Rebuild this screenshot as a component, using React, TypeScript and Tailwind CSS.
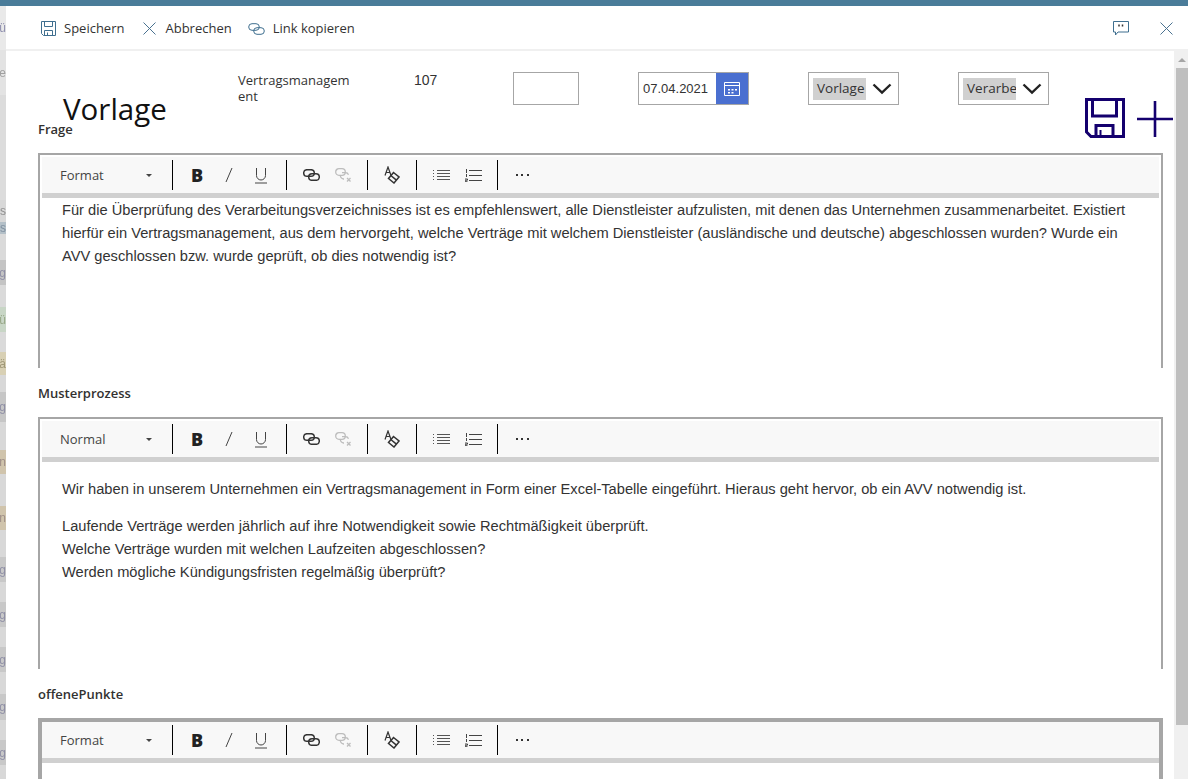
import React from 'react';

const strip = [
  { h: 44, c: 'bg-[#e9e9e9]', t: 'ü', k: 'text-[#8f8fae]' },
  { h: 45, c: 'bg-[#e3e3e3]', t: 'ie', k: 'text-[#a0a0a0]' },
  { h: 105, c: 'bg-[#dcdcdc]', t: '', k: '' },
  { h: 22, c: 'bg-[#d8d8d8]', t: 'is', k: 'text-[#8f8f8f]' },
  { h: 12, c: 'bg-[#b4c0c8]', t: 's', k: 'text-[#7f8f9f]' },
  { h: 26, c: 'bg-[#dadada]', t: '', k: '' },
  { h: 25, c: 'bg-[#c4c4c4]', t: 'ng', k: 'text-[#8f8fa5]' },
  { h: 22, c: 'bg-[#dadada]', t: '', k: '' },
  { h: 25, c: 'bg-[#c8d6c6]', t: 'ü', k: 'text-[#98a888]' },
  { h: 20, c: 'bg-[#dadada]', t: '', k: '' },
  { h: 23, c: 'bg-[#d8d0b4]', t: 'ä', k: 'text-[#a09878]' },
  { h: 17, c: 'bg-[#d8d8d8]', t: '', k: '' },
  { h: 30, c: 'bg-[#c6c6c6]', t: 'ng', k: 'text-[#8f8fa5]' },
  { h: 28, c: 'bg-[#d8d8d8]', t: '', k: '' },
  { h: 24, c: 'bg-[#d0c4ac]', t: 'n', k: 'text-[#a09088]' },
  { h: 32, c: 'bg-[#d8d8d8]', t: '', k: '' },
  { h: 24, c: 'bg-[#d0c4ac]', t: 'n', k: 'text-[#a09088]' },
  { h: 27, c: 'bg-[#d8d8d8]', t: '', k: '' },
  { h: 25, c: 'bg-[#c8c8c8]', t: 'ng', k: 'text-[#8f8fa5]' },
  { h: 20, c: 'bg-[#d8d8d8]', t: '', k: '' },
  { h: 25, c: 'bg-[#c8c8c8]', t: 'ng', k: 'text-[#8f8fa5]' },
  { h: 20, c: 'bg-[#d8d8d8]', t: '', k: '' },
  { h: 25, c: 'bg-[#c8c8c8]', t: 'ng', k: 'text-[#8f8fa5]' },
  { h: 22, c: 'bg-[#d8d8d8]', t: '', k: '' },
  { h: 26, c: 'bg-[#c8c8c8]', t: 'ng', k: 'text-[#8f8fa5]' },
  { h: 20, c: 'bg-[#d8d8d8]', t: '', k: '' },
  { h: 25, c: 'bg-[#c8c8c8]', t: 'ng', k: 'text-[#8f8fa5]' },
  { h: 16, c: 'bg-[#d8d8d8]', t: '', k: '' },
];

function SaveIcon() {
  return (
    <svg width="15" height="15" viewBox="0 0 15 15" fill="none" stroke="#3f6f8f" strokeWidth="1">
      <path d="M.5.5h14v14h-12l-2-2z" />
      <path d="M3.5.5v5h8v-5M3.5 14.5v-5h8v5M6.5 14.5v-3" />
    </svg>
  );
}

function CloseIcon() {
  return (
    <svg width="13" height="13" viewBox="0 0 13 13" fill="none" stroke="#4a7290" strokeWidth="1">
      <path d="M.5.5l12 12M12.5.5l-12 12" />
    </svg>
  );
}

function LinkIcon({ color = '#3f6f8f', w = 1 }: { color?: string; w?: number }) {
  return (
    <svg width="17" height="12" viewBox="0 0 17 12" fill="none" stroke={color} strokeWidth={w}>
      <rect x="0.7" y="0.7" width="10.6" height="6.6" rx="3.3" />
      <rect x="5.7" y="4.7" width="10.6" height="6.6" rx="3.3" />
    </svg>
  );
}

function FeedbackIcon() {
  return (
    <svg width="16" height="15" viewBox="0 0 16 15" fill="none" stroke="#3f6f8f" strokeWidth="1">
      <path d="M.5.5h15v10.5H5l-2.5 3V11H.5z" />
      <path d="M6 3.5v2M9.5 3.5v2" strokeWidth="1.5" stroke="#333333" />
    </svg>
  );
}

function Chevron() {
  return (
    <svg width="20" height="12" viewBox="0 0 20 12" fill="none" stroke="#222222" strokeWidth="2.4">
      <path d="M1.5 1.5L10 9.5l8.5-8" />
    </svg>
  );
}

function Dropdown({ label }: { label: string }) {
  return (
    <div className="w-[91px] h-[33px] border border-[#a6a6a6] flex items-center pl-[4px] gap-[6px]">
      <div className="w-[53px] h-[22px] bg-[#d0d0d0] overflow-hidden whitespace-nowrap text-[13.5px] leading-[21px] pl-[4px] text-[#333333]">
        {label}
      </div>
      <Chevron />
    </div>
  );
}

function ToolButton({ children }: { children: React.ReactNode }) {
  return <div className="w-[32px] h-[30px] flex items-center justify-center">{children}</div>;
}

function Toolbar({ label }: { label: string }) {
  return (
    <div>
      <div className="h-[36px] bg-[#f8f8f8] flex items-center">
        <div className="w-[130px] h-[30px] flex items-center justify-between pl-[18px] pr-[20px] pt-[1px] text-[13px] text-[#444444]">
          <span>{label}</span>
          <span className="w-0 h-0 border-x-[3px] border-x-transparent border-t-[3px] border-t-[#444444]" />
        </div>
        <div className="h-[30px] flex pl-[8px] pr-[9px] border-l border-black">
          <ToolButton>
            <span className="text-[18px] font-extrabold text-[#222222]">B</span>
          </ToolButton>
          <ToolButton>
            <svg width="10" height="16" viewBox="0 0 10 16" fill="none" stroke="#444444" strokeWidth="1">
              <path d="M8 1L2 15" />
            </svg>
          </ToolButton>
          <ToolButton>
            <svg width="14" height="17" viewBox="0 0 14 17" fill="none" stroke="#444444" strokeWidth="1">
              <path d="M2.5 1v7.5a4.5 4.5 0 0 0 9 0V1M1 16h12" />
            </svg>
          </ToolButton>
        </div>
        <div className="h-[30px] flex px-[8px] border-l border-black">
          <ToolButton>
            <LinkIcon color="#333333" w={1.5} />
          </ToolButton>
          <ToolButton>
            <svg width="17" height="14" viewBox="0 0 17 14" fill="none" stroke="#bdbdbd" strokeWidth="1.3">
              <rect x="0.7" y="0.7" width="9.6" height="6.6" rx="3.3" />
              <path d="M7 4.7h3.5a3.3 3.3 0 0 1 3 2M9 11H8.5a3.3 3.3 0 0 1-3-4" />
              <path d="M12 10l3.5 3.5M15.5 10L12 13.5" />
            </svg>
          </ToolButton>
        </div>
        <div className="h-[30px] flex px-[8px] border-l border-black">
          <ToolButton>
            <svg width="16" height="18" viewBox="0 0 16 18" fill="none" stroke="#333333" strokeWidth="1.2">
              <path d="M1 9.5L4 1l3 8.5M2 6.5h4" />
              <path d="M9.5 6.5l5.5 4.5-5 6-5.5-4.5zM6.8 9.5l5.6 4.6" strokeWidth="1.5" />
            </svg>
          </ToolButton>
        </div>
        <div className="h-[30px] flex px-[8px] border-l border-black">
          <ToolButton>
            <svg width="17" height="13" viewBox="0 0 17 13" fill="none" stroke="#555555" strokeWidth="1.2">
              <path d="M4 1.5h13M4 4.5h13M4 7.5h13M4 10.5h13" />
              <path d="M0 1.5h2M0 4.5h2M0 7.5h2M0 10.5h2" strokeDasharray="1 1" />
            </svg>
          </ToolButton>
          <ToolButton>
            <svg width="17" height="13" viewBox="0 0 17 13" fill="none" stroke="#444444" strokeWidth="1">
              <path d="M4 1.5h13M4 6.5h13M4 11.5h13" />
              <path d="M1.5 0v4M1.5 5v3M0 10h2.5v1.2H0v1.5h2.5" />
            </svg>
          </ToolButton>
        </div>
        <div className="h-[30px] flex px-[8px] border-l border-black">
          <ToolButton>
            <span className="flex gap-[3.5px]">
              <span className="w-[2px] h-[2px] bg-[#333333]" />
              <span className="w-[2px] h-[2px] bg-[#333333]" />
              <span className="w-[2px] h-[2px] bg-[#333333]" />
            </span>
          </ToolButton>
        </div>
      </div>
      <div className="h-[5px] bg-[#d0d0d0]" />
    </div>
  );
}

function FieldLabel({ children }: { children: React.ReactNode }) {
  return <div className="h-[16px] text-[13px] leading-[16px] font-semibold text-[#323130]">{children}</div>;
}

export default function App() {
  return (
    <div className="w-[1188px] h-[779px] overflow-hidden flex flex-col bg-white" style={{ fontFamily: '"Open Sans", sans-serif' }}>
      <div className="h-[6px] shrink-0 bg-[#4a7c99]" />
      <div className="flex flex-1 min-h-0">
        {/* Liste hinter dem Panel */}
        <div className="w-[6px] shrink-0 overflow-hidden">
          <div className="flex flex-col blur-[0.5px]" style={{ fontFamily: '"Liberation Sans", sans-serif' }}>
            {strip.map((r, i) => (
              <div
                key={i}
                className={`${r.c} ${r.k} flex items-center justify-end shrink-0 overflow-hidden text-[12px] whitespace-nowrap`}
                style={{ height: r.h }}
              >
                {r.t}
              </div>
            ))}
          </div>
        </div>

        <div className="flex-1 min-w-0 flex flex-col">
          {/* Befehlsleiste */}
          <div className="h-[45px] shrink-0 border-b-2 border-[#f0f0f0] flex items-center pl-[35px] pr-[15px] pt-[2px] text-[13px] text-[#333333]">
            <div className="flex items-center gap-[8px] mr-[19px]">
              <SaveIcon />
              <span>Speichern</span>
            </div>
            <div className="flex items-center gap-[9px] mr-[16px]">
              <CloseIcon />
              <span>Abbrechen</span>
            </div>
            <div className="flex items-center gap-[8px]">
              <LinkIcon />
              <span>Link kopieren</span>
            </div>
            <div className="ml-auto flex items-center gap-[31px]">
              <FeedbackIcon />
              <CloseIcon />
            </div>
          </div>

          <div className="flex flex-1 min-h-0">
            <div className="flex-1 min-w-0 pl-[32px] pr-[11px] overflow-hidden">
              {/* Kopfzeile */}
              <div className="h-[70px] flex items-start">
                <div className="w-[200px] shrink-0 pl-[25px] pt-[38px] text-[29.5px] leading-[40px] text-[#111111]">Vorlage</div>
                <div className="w-[176px] shrink-0 pt-[21px]">
                  <div className="w-[118px] break-all text-[13px] leading-[16px] text-[#333333]">Vertragsmanagement</div>
                </div>
                <div className="w-[99px] shrink-0 pt-[21px] text-[14px] leading-[16px] text-[#333333]" style={{ fontFamily: '"Liberation Sans", sans-serif' }}>107</div>
                <div className="mt-[21px] w-[66px] h-[33px] shrink-0 border border-[#a6a6a6]" />
                <div className="ml-[59px] mt-[21px] w-[111px] h-[33px] shrink-0 border border-[#a6a6a6] flex">
                  <div className="flex-1 pl-[4px] text-[13px] leading-[31px] text-[#333333]" style={{ fontFamily: '"Liberation Sans", sans-serif' }}>07.04.2021</div>
                  <div className="w-[32px] bg-[#4a6fd0] flex items-center justify-center">
                    <svg width="16" height="16" viewBox="0 0 16 16" fill="none" stroke="#ffffff" strokeWidth="1">
                      <path d="M.5 1.5h15v13H.5zM.5 4.5h15" />
                      <path d="M4 8h2v1.5H4zM7.5 8h2v1.5h-2zM11 8h2v1.5h-2zM4 11h2v1.5H4zM7.5 11h2v1.5h-2z" fill="#ffffff" stroke="none" />
                    </svg>
                  </div>
                </div>
                <div className="ml-[59px] mt-[21px] shrink-0"><Dropdown label="Vorlage" /></div>
                <div className="ml-[59px] mt-[21px] shrink-0"><Dropdown label="Verarbeitung" /></div>
                <div className="ml-[36px] mt-[47px] flex gap-[12px] shrink-0">
                  <svg width="40" height="40" viewBox="0 0 40 40" fill="none" stroke="#14006e" strokeWidth="3">
                    <path d="M1.5 1.5h37v37H6l-4.5-4.5z" />
                    <path d="M7.5 1.5v16.5h24V1.5M11 38.5V27.5h17v11" />
                    <path d="M15.5 38.5V32" strokeWidth="2" />
                  </svg>
                  <svg width="36" height="36" viewBox="0 0 36 36" fill="none" stroke="#14006e" strokeWidth="2.6" className="mt-[3px]">
                    <path d="M0 18h36M18 0v36" />
                  </svg>
                </div>
              </div>

              <FieldLabel>Frage</FieldLabel>
              <div className="mt-[16px] h-[215px] border-x-2 border-t-2 border-[#a6a6a6] px-[2px] pt-[2px]">
                <Toolbar label="Format" />
                <div className="pl-[20px] pr-[12px] pt-[1px] text-[14.66px] leading-[23px] text-[#333333]" style={{ fontFamily: '"Liberation Sans", sans-serif' }}>
                  Für die Überprüfung des Verarbeitungsverzeichnisses ist es empfehlenswert, alle Dienstleister aufzulisten, mit denen das Unternehmen zusammenarbeitet. Existiert hierfür ein Vertragsmanagement, aus dem hervorgeht, welche Verträge mit welchem Dienstleister (ausländische und deutsche) abgeschlossen wurden? Wurde ein AVV geschlossen bzw. wurde geprüft, ob dies notwendig ist?
                </div>
              </div>

              <div className="mt-[17px]"><FieldLabel>Musterprozess</FieldLabel></div>
              <div className="mt-[16px] h-[252px] border-x-2 border-t-2 border-[#a6a6a6] px-[2px] pt-[2px]">
                <Toolbar label="Normal" />
                <div className="pl-[20px] pr-[12px] pt-[16px] text-[14.66px] leading-[23px] text-[#333333]" style={{ fontFamily: '"Liberation Sans", sans-serif' }}>
                  <p className="mb-[14px]">Wir haben in unserem Unternehmen ein Vertragsmanagement in Form einer Excel-Tabelle eingeführt. Hieraus geht hervor, ob ein AVV notwendig ist.</p>
                  <p>Laufende Verträge werden jährlich auf ihre Notwendigkeit sowie Rechtmäßigkeit überprüft.</p>
                  <p>Welche Verträge wurden mit welchen Laufzeiten abgeschlossen?</p>
                  <p>Werden mögliche Kündigungsfristen regelmäßig überprüft?</p>
                </div>
              </div>

              <div className="mt-[17px]"><FieldLabel>offenePunkte</FieldLabel></div>
              <div className="mt-[16px] h-[70px] border-x-4 border-t-4 border-[#a6a6a6]">
                <Toolbar label="Format" />
              </div>
            </div>

            {/* Scrollbar */}
            <div className="w-[14px] shrink-0 pl-[2px] flex flex-col bg-[#f0f0f0]">
              <div className="h-[17px] flex items-center justify-center">
                <span className="w-0 h-0 border-x-[4px] border-x-transparent border-b-[4px] border-b-[#a6a6a6]" />
              </div>
              <div className="h-[657px] bg-[#bfbfbf]" />
            </div>
          </div>
        </div>
      </div>
    </div>
  );
}
